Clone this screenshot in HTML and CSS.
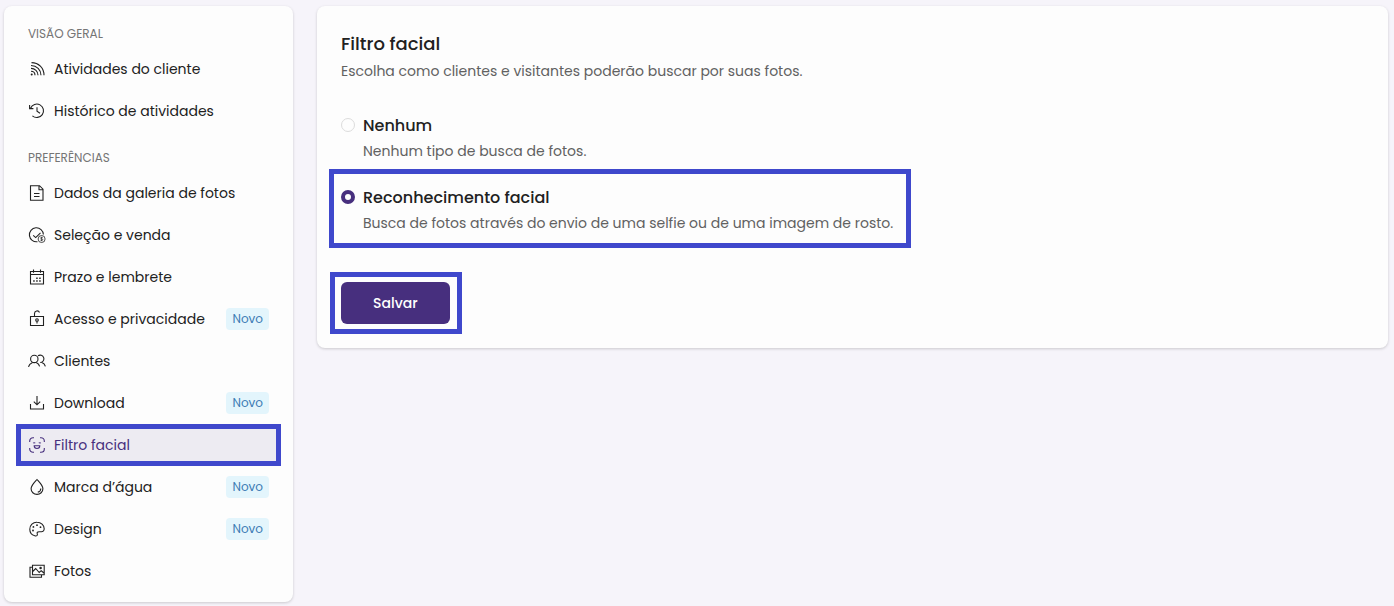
FILE: index.html
```html
<!DOCTYPE html>
<html lang="pt-BR">
<head>
<meta charset="utf-8">
<meta name="viewport" content="width=device-width, initial-scale=1">
<title>Filtro facial</title>
<link rel="stylesheet" href="styles.css">
</head>
<body>
<div class="layout">
  <nav class="card sidebar" aria-label="Menu da galeria">
    <h2 class="section-title">VISÃO GERAL</h2>
    <a class="item" href="#atividades">
      <svg class="icon" viewBox="0 0 18 18"><circle cx="3.700" cy="14.500" r="1" fill="currentColor" stroke="none"/><path d="M3 11.300c2.300 0 4 1.700 4 4M3 8.400c4 0 7 3 7 6.900M3 5.500c5.800 0 10 4.200 10 9.800M3.500 2.600c7 0 12.500 5.300 12.500 12.700"/></svg>
      <span class="label">Atividades do cliente</span>
    </a>
    <a class="item" href="#historico">
      <svg class="icon" viewBox="0 0 18 18"><path d="M2.600 6.200A6.700 6.700 0 1 1 4.400 13.800M1.600 3.100v3.500h3.800M9 5.200v4l3 2"/></svg>
      <span class="label">Histórico de atividades</span>
    </a>
    <h2 class="section-title section-next">PREFERÊNCIAS</h2>
    <a class="item" href="#dados">
      <svg class="icon" viewBox="0 0 18 18"><path d="M2.500 1.700h9l3.500 3.500v11.100h-12.500zM11 1.700v4h4M6 9.500h5.500M6 12.500h5.500"/></svg>
      <span class="label">Dados da galeria de fotos</span>
    </a>
    <a class="item" href="#venda">
      <svg class="icon" viewBox="0 0 18 18"><path d="M9.500 15.700A7 7 0 1 1 15.400 8.500M5.200 9.300l2.500 2.300 4.800-4.800"/><circle cx="13.600" cy="13" r="3.500" stroke-width=".8"/><path stroke-width=".7" d="M14.800 11.800c-.6-.7-2.300-.5-2.300.3s2.300.7 2.300 1.600-1.800 1-2.500.3M13.600 10.800v4.400"/></svg>
      <span class="label">Seleção e venda</span>
    </a>
    <a class="item" href="#prazo">
      <svg class="icon" viewBox="0 0 18 18"><path d="M2.500 3.500h13v12.500h-13zM2.500 6.500h13M5.500 1.500v3.200M12.500 1.500v3.200"/><path stroke-dasharray="1.500 1.500" stroke-width="1.400" d="M8.200 10.200h6M5.200 13h8"/></svg>
      <span class="label">Prazo e lembrete</span>
    </a>
    <a class="item" href="#acesso">
      <svg class="icon" viewBox="0 0 18 18"><path d="M2.500 6.500h13v9h-13zM6.500 6.500V3.500a2.600 2.600 0 0 1 5-1M9 11.300v2.200"/><circle cx="9" cy="10" r="1.300"/></svg>
      <span class="label">Acesso e privacidade</span><span class="badge">Novo</span>
    </a>
    <a class="item" href="#clientes">
      <svg class="icon" viewBox="0 0 18 18"><circle cx="6.300" cy="6.900" r="3.700"/><path d="M.5 14.800c.4-2.500 2-3.500 4-4.400M8.200 10.400c1.700.7 3 1.900 3.400 4M10 3.800a3.700 3.700 0 1 1 2.200 6.700M13.500 10.300c2 .8 3.400 2 3.900 4"/></svg>
      <span class="label">Clientes</span>
    </a>
    <a class="item" href="#download">
      <svg class="icon" viewBox="0 0 18 18"><path d="M9 2v8.500M5.800 7.700L9 10.800l3.200-3.100M2.500 10v5h13v-5"/></svg>
      <span class="label">Download</span><span class="badge">Novo</span>
    </a>
    <a class="item item-active" href="#filtro" aria-current="page">
      <svg class="icon" viewBox="0 0 18 18"><path d="M1.700 6V5a3.300 3.300 0 0 1 3.300-3.300h1M12 1.700h1A3.300 3.300 0 0 1 16.300 5v1M16.300 12v1a3.300 3.300 0 0 1-3.300 3.300h-1M6 16.300H5A3.300 3.300 0 0 1 1.700 13v-1M5.200 7.200c.6-.7 1.500-.7 2 0M10.800 7.200c.6-.7 1.500-.7 2 0M6.200 9.800h5.600c0 3.500-5.600 3.500-5.600 0z"/></svg>
      <span class="label">Filtro facial</span>
    </a>
    <a class="item" href="#marca">
      <svg class="icon" viewBox="0 0 18 18"><path d="M9 1.500c3 3.300 5.900 6 5.900 9.200a5.900 5.700 0 0 1-11.800 0C3.100 7.500 6 4.800 9 1.500zM12.800 10.500c0 2-1.200 3.300-3 3.600"/></svg>
      <span class="label">Marca d’água</span><span class="badge">Novo</span>
    </a>
    <a class="item" href="#design">
      <svg class="icon" viewBox="0 0 18 18"><path d="M6.800 15.800C4 15 1.800 12.300 1.800 9.200A6.900 6.900 0 0 1 9 2.200c4 0 7.200 2.800 7.200 6.500 0 2.200-1.500 3.200-3.200 3h-2c-1.800 0-2.200 1-1.700 2.200.5 1.500-.7 2.400-2.500 1.900z"/><g fill="currentColor" stroke="none"><circle cx="5" cy="10.500" r=".9"/><circle cx="5.400" cy="6.900" r=".9"/><circle cx="9" cy="5.200" r=".9"/><circle cx="12.500" cy="7.200" r=".9"/></g></svg>
      <span class="label">Design</span><span class="badge">Novo</span>
    </a>
    <a class="item" href="#fotos">
      <svg class="icon" viewBox="0 0 18 18"><path d="M4.500 3.200h11.700v9.600H4.500zM4.500 5.200H2v10h11.500v-2.400M4.700 9.500l3-3 3.500 4 2-1.800 2.800 2.300"/><circle cx="12.600" cy="5.900" r=".7"/></svg>
      <span class="label">Fotos</span>
    </a>
  </nav>
  <main class="card content">
    <h1 class="title">Filtro facial</h1>
    <p class="hint">Escolha como clientes e visitantes poderão buscar por suas fotos.</p>
    <form class="form">
      <div class="option">
        <input class="radio" type="radio" name="filtro" id="nenhum" aria-describedby="nenhum-d">
        <div>
          <label class="option-label" for="nenhum">Nenhum</label>
          <p class="hint" id="nenhum-d">Nenhum tipo de busca de fotos.</p>
        </div>
      </div>
      <div class="option option-marked">
        <input class="radio" type="radio" name="filtro" id="facial" aria-describedby="facial-d" checked>
        <div>
          <label class="option-label" for="facial">Reconhecimento facial</label>
          <p class="hint" id="facial-d">Busca de fotos através do envio de uma selfie ou de uma imagem de rosto.</p>
        </div>
      </div>
      <div class="actions"><button class="save" type="button">Salvar</button></div>
    </form>
  </main>
</div>
</body>
</html>
```
FILE: styles.css
```css
* { box-sizing: border-box; }

body {
  margin: 0;
  background: #f6f4fa;
  color: #212121;
  font: 14px/20px Poppins, Inter, "Open Sans", sans-serif;
}

h1, h2, p { margin: 0; font-weight: 400; }

.layout {
  display: flex;
  align-items: flex-start;
  gap: 24px;
  padding: 6px 6px 4px 4px;
}

.card {
  background: #fdfdfd;
  border-radius: 8px;
  box-shadow: 0 1px 3px rgba(0, 0, 0, .18);
}

.sidebar {
  flex: 0 0 289px;
  padding: 18px 12px 10px;
}

.section-title {
  padding: 0 12px 4px;
  color: #757575;
  font-size: 12px;
  line-height: 20px;
}

.section-next { padding-top: 16px; }

.item {
  display: flex;
  align-items: center;
  gap: 8px;
  height: 42px;
  padding: 0 12px;
  color: inherit;
  text-decoration: none;
}

.item-active {
  background: #edebf2;
  color: #472f7e;
  box-shadow: inset 0 0 0 5px #3f48cc;
}

.icon {
  flex: none;
  width: 18px;
  height: 18px;
  fill: none;
  stroke: currentColor;
  stroke-width: 1.1;
}

.label { flex: 1; white-space: nowrap; }

.badge {
  padding: 1px 6px;
  border-radius: 4px;
  background: #e3f5fc;
  color: #3c7cb4;
  font-size: 12px;
}

.content {
  flex: 1;
  min-width: 0;
  padding: 24px;
}

.title {
  margin-bottom: 3px;
  font-size: 18px;
  font-weight: 500;
  line-height: 28px;
}

.hint { color: #616161; }

.form {
  display: flex;
  flex-direction: column;
  align-items: flex-start;
  gap: 24px;
  margin-top: 32px;
}

.option {
  display: flex;
  align-items: flex-start;
  gap: 8px;
}

.option-label {
  display: block;
  margin-bottom: 2px;
  font-size: 16px;
  font-weight: 500;
  line-height: 26px;
}

.radio {
  appearance: none;
  flex: none;
  width: 14px;
  height: 14px;
  margin: 5px 0;
  border: 1px solid #dcdcdc;
  border-radius: 50%;
  background: #fdfdfd;
}

.radio:checked { border: 4px solid #472f7e; }

.option-marked, .actions { position: relative; }

.option-marked::after, .actions::after {
  content: "";
  position: absolute;
  border: 5px solid #3f48cc;
  pointer-events: none;
}

.option-marked::after { inset: -16px -18px -15px -12px; }

.actions { margin-top: 25px; }

.actions::after { inset: -10px -12px -10px -11px; }

.save {
  display: block;
  height: 42px;
  padding: 0 32px;
  border: 0;
  border-radius: 6px;
  background: #472f7e;
  color: #fff;
  font: inherit;
  font-weight: 500;
}
```
